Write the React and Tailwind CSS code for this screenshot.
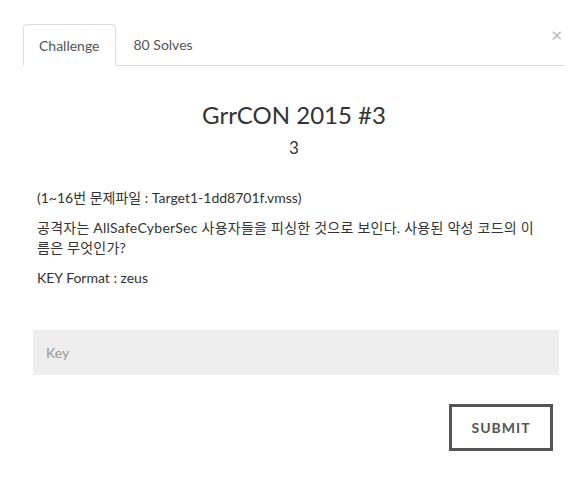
import React, { useState } from 'react';

const font = { fontFamily: 'Lato, "Noto Sans CJK KR", sans-serif' };

const App = () => {
    const [tab, setTab] = useState('challenge');

    return (
        <div className="w-[588px] h-[492px] bg-white text-[#333] relative" style={font}>
            {/* close */}
            <button className="absolute left-[551px] top-[24px] text-[#bbb] text-[20px] leading-none">×</button>

            {/* tabs */}
            <div className="pt-[24px] pl-[23px] pr-[23px]">
                <div className="flex border-b border-[#ddd] h-[42px]">
                    <div
                        onClick={() => setTab('challenge')}
                        className="px-[15px] h-[42px] flex items-center border border-[#ddd] border-b-white rounded-t-[4px] bg-white text-[14px] text-[#555] -mb-px cursor-pointer"
                    >
                        Challenge
                    </div>
                    <div
                        onClick={() => setTab('solves')}
                        className="px-[18px] h-[41px] flex items-center text-[14px] text-[#555] cursor-pointer"
                    >
                        80 Solves
                    </div>
                </div>
            </div>

            {/* body */}
            <div className="px-[33px] pt-[34px]">
                <h1 className="text-center text-[24px] leading-[30px] text-[#333]">GrrCON 2015 #3</h1>
                <p className="text-center text-[17px] leading-[24px] mt-[6px] text-[#333]">3</p>

                <div className="pl-[4px] pr-[10px] mt-[28px] text-[14px] leading-[20px] text-[#333]">
                    <p>(1~16번 문제파일 : Target1-1dd8701f.vmss)</p>
                    <p className="mt-[10px] tracking-[0.25px]">공격자는 AllSafeCyberSec 사용자들을 피싱한 것으로 보인다. 사용된 악성 코드의 이름은 무엇인가?</p>
                    <p className="mt-[10px]">KEY Format : zeus</p>
                </div>

                <input
                    className="mt-[42px] w-[526px] h-[45px] bg-[#eee] px-[13px] text-[14px] text-[#555] placeholder:text-[#999] outline-none"
                    placeholder="Key"
                    style={font}
                />

                <div className="flex justify-end mt-[29px] pr-[2px]">
                    <button className="w-[104px] h-[47px] border-[3px] border-[#555] text-[14px] font-bold tracking-[1px] text-[#555]">
                        SUBMIT
                    </button>
                </div>
            </div>
        </div>
    );
};

export default App;
